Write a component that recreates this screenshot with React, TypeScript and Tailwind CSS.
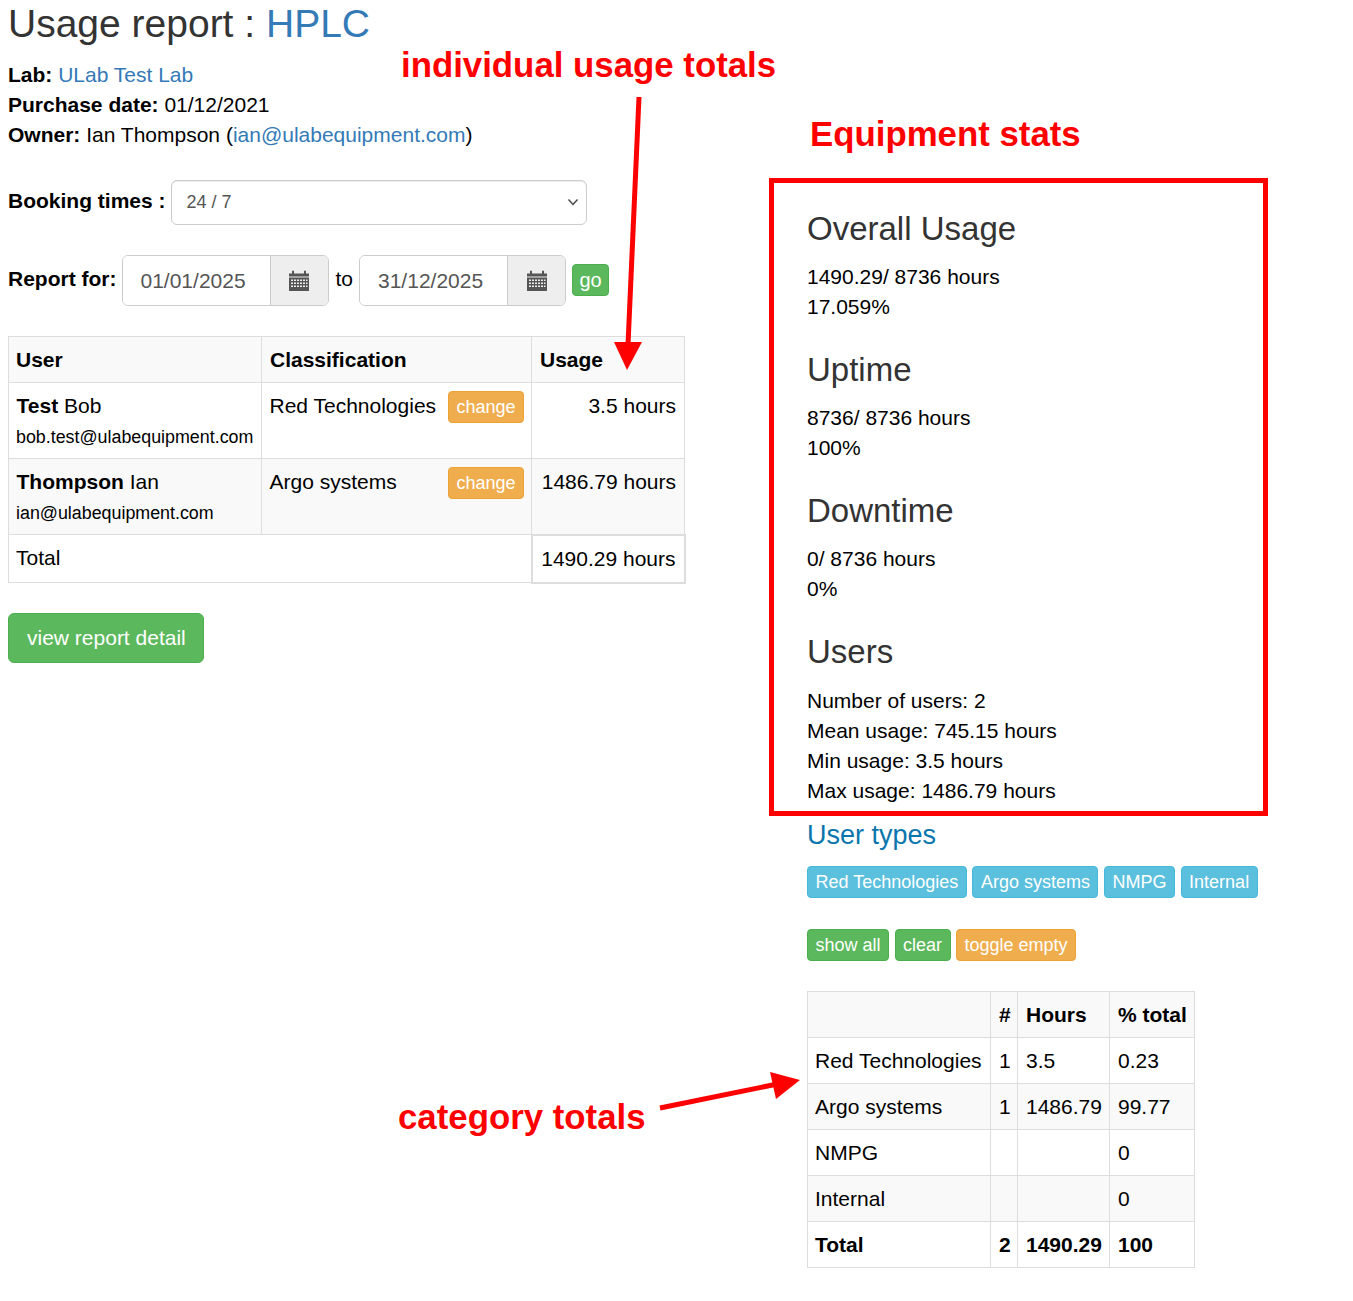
import React from "react";

const Cal = () => (
  <svg width="20" height="21" viewBox="0 0 20 21" fill="#555">
    <path d="M0 3.5h3V1.5a1 1 0 0 1 2 0v2h10v-2a1 1 0 0 1 2 0v2h3V6.5H0z" />
    <path fillRule="evenodd" d="M0 7.5h20V21H0zM2 9.5v1.6h2V9.5zM5 9.5v1.6h2V9.5zM8 9.5v1.6h2V9.5zM11 9.5v1.6h2V9.5zM14 9.5v1.6h2V9.5zM17 9.5v1.6h1.5V9.5zM2 12.5v1.6h2v-1.6zM5 12.5v1.6h2v-1.6zM8 12.5v1.6h2v-1.6zM11 12.5v1.6h2v-1.6zM14 12.5v1.6h2v-1.6zM17 12.5v1.6h1.5v-1.6zM2 15.5v1.6h2v-1.6zM5 15.5v1.6h2v-1.6zM8 15.5v1.6h2v-1.6zM11 15.5v1.6h2v-1.6zM14 15.5v1.6h2v-1.6zM17 15.5v1.6h1.5v-1.6z" />
  </svg>
);

const DateInput = ({ value, w }: { value: string; w: string }) => (
  <div className={`flex h-[51px] ${w} rounded-[6px] border border-[#ccc] overflow-hidden`}>
    <div className="flex-1 flex items-center pl-[18px] text-[#555] bg-white">{value}</div>
    <div className="w-[58px] flex items-center justify-center bg-[#eee] border-l border-[#ccc]">
      <Cal />
    </div>
  </div>
);

const Sm = ({ c, children }: { c: string; children: React.ReactNode }) => (
  <span className={`inline-flex items-center justify-center h-[32px] px-[7.5px] text-[18px] text-white rounded-[4px] border ${c}`}>{children}</span>
);
const orange = "bg-[#f0ad4e] border-[#eea236]";
const green = "bg-[#5cb85c] border-[#4cae4c]";
const blue = "bg-[#5bc0de] border-[#46b8da]";

const Stat = ({ title, lines, mt, mb }: { title: string; lines: string[]; mt?: string; mb: string }) => (
  <div className={mt}>
    <h3 className={`text-[33px] leading-[35px] text-[#333] ${mb}`}>{title}</h3>
    {lines.map((l) => (
      <div key={l}>{l}</div>
    ))}
  </div>
);

const td = "border border-[#ddd] pl-[8px] first:pl-[7px] pr-[8px] pt-[8px] pb-[7px] align-top";
const tu = "border border-[#ddd] pl-[8px] first:pl-[7px] pr-[8px] pt-[8px] pb-[6px] align-top";
const tc = "border border-[#ddd] pl-[7.5px] pr-[7px] pt-[8px] pb-[6px] align-top";

export default function App() {
  return (
    <div className="relative w-[1353px] h-[1301px] bg-white text-black text-[21px] leading-[30px] font-['Liberation_Sans',Arial,sans-serif] overflow-hidden">
      <div className="flex">
        <div className="w-[807px] pl-[8px] shrink-0">
          <h1 className="text-[39px] leading-[42px] text-[#333] mt-[3px]">
            Usage report : <a className="text-[#337ab7]">HPLC</a>
          </h1>
          <div className="mt-[15px]">
            <div><b>Lab:</b> <a className="text-[#337ab7]">ULab Test Lab</a></div>
            <div><b>Purchase date:</b> 01/12/2021</div>
            <div><b>Owner:</b> Ian Thompson (<a className="text-[#337ab7]">ian@ulabequipment.com</a>)</div>
          </div>
          <div className="flex items-center mt-[30px] h-[45px]">
            <b className="mr-[5px] -mt-[3px]">Booking times :</b>
            <div className="flex items-center justify-between w-[416px] h-[45px] rounded-[6px] border border-[#ccc] pl-[15px] pr-[7px] pb-[2px] text-[18px] text-[#555] shadow-[inset_0_1px_1px_rgba(0,0,0,0.075)]">
              <span>24 / 7</span>
              <svg width="12" height="8" viewBox="0 0 12 8" fill="none" stroke="#444" strokeWidth="1.4"><path d="M1.5 1.5 6 6.5l4.5-5" /></svg>
            </div>
          </div>
          <div className="flex items-center mt-[30px] h-[51px]">
            <b className="mr-[5px] -mt-[3px]">Report for:</b>
            <DateInput value="01/01/2025" w="w-[207px]" />
            <span className="ml-[7px] mr-[6px] -mt-[3px]">to</span>
            <DateInput value="31/12/2025" w="w-[207px]" />
            <span className="ml-[6px] -mt-[2px] inline-flex items-center justify-center h-[32px] w-[37px] text-[20px] text-white rounded-[4px] border bg-[#5cb85c] border-[#4cae4c]">go</span>
          </div>
          <table className="mt-[30px] w-[676px] table-fixed border-collapse">
            <colgroup>
              <col className="w-[253px]" />
              <col className="w-[270px]" />
              <col className="w-[153px]" />
            </colgroup>
            <tbody>
              <tr className="bg-[#f9f9f9]">
                <th className={`${td} text-left`}>User</th>
                <th className={`${td} text-left`}>Classification</th>
                <th className={`${td} text-left`}>Usage</th>
              </tr>
              <tr>
                <td className={tu}>
                  <div className="pl-[0.5px]"><b>Test</b> Bob</div>
                  <div className="text-[17.85px] mt-[1px] whitespace-nowrap">bob.test@ulabequipment.com</div>
                </td>
                <td className={tc}>
                  <div className="flex justify-between items-start">
                    <span>Red Technologies</span>
                    <Sm c={orange}>change</Sm>
                  </div>
                </td>
                <td className={`${tu} text-right`}>3.5 hours</td>
              </tr>
              <tr className="bg-[#f9f9f9]">
                <td className={tu}>
                  <div className="pl-[0.5px]"><b>Thompson</b> Ian</div>
                  <div className="text-[17.85px] mt-[1px] whitespace-nowrap">ian@ulabequipment.com</div>
                </td>
                <td className={tc}>
                  <div className="flex justify-between items-start">
                    <span>Argo systems</span>
                    <Sm c={orange}>change</Sm>
                  </div>
                </td>
                <td className={`${tu} text-right`}>1486.79 hours</td>
              </tr>
              <tr className="h-[48px]">
                <td className={td} colSpan={2}>Total</td>
                <td className="border-2 border-[#ddd] pl-[7px] pr-[8px] pt-[8px] pb-[7px] align-top text-right whitespace-nowrap">1490.29 hours</td>
              </tr>
            </tbody>
          </table>
          <div className="mt-[29px] inline-flex items-center h-[50px] pl-[18px] pr-[17px] text-white rounded-[6px] border bg-[#5cb85c] border-[#4cae4c]">view report detail</div>
        </div>
        <div className="flex-1 pt-[211px]">
          <Stat mb="mb-[16px]" title="Overall Usage" lines={["1490.29/ 8736 hours", "17.059%"]} />
          <Stat mb="mb-[16px]" mt="mt-[30px]" title="Uptime" lines={["8736/ 8736 hours", "100%"]} />
          <Stat mb="mb-[16px]" mt="mt-[30px]" title="Downtime" lines={["0/ 8736 hours", "0%"]} />
          <Stat mb="mb-[17px]" mt="mt-[30px]" title="Users" lines={["Number of users: 2", "Mean usage: 745.15 hours", "Min usage: 3.5 hours", "Max usage: 1486.79 hours"]} />
          <h4 className="mt-[11px] text-[27px] leading-[36px] text-[#0a76ad]">User types</h4>
          <div className="mt-[13px] flex gap-[5.6px]">
            <Sm c={blue}>Red Technologies</Sm>
            <Sm c={blue}>Argo systems</Sm>
            <Sm c={blue}>NMPG</Sm>
            <Sm c={blue}>Internal</Sm>
          </div>
          <div className="mt-[31px] flex gap-[5.5px]">
            <Sm c={green}>show all</Sm>
            <Sm c={green}>clear</Sm>
            <Sm c={orange}>toggle empty</Sm>
          </div>
          <table className="mt-[30px] w-[387px] table-fixed border-collapse">
            <colgroup>
              <col className="w-[183px]" />
              <col className="w-[27px]" />
              <col className="w-[92px]" />
              <col className="w-[85px]" />
            </colgroup>
            <tbody>
              <tr className="bg-[#f9f9f9]">
                <th className={td}></th>
                <th className={`${td} text-left`}>#</th>
                <th className={`${td} text-left`}>Hours</th>
                <th className={`${td} text-left whitespace-nowrap`}>% total</th>
              </tr>
              {[
                ["Red Technologies", "1", "3.5", "0.23"],
                ["Argo systems", "1", "1486.79", "99.77"],
                ["NMPG", "", "", "0"],
                ["Internal", "", "", "0"],
              ].map((r, i) => (
                <tr key={r[0]} className={i % 2 === 1 ? "bg-[#f9f9f9]" : "bg-white"}>
                  {r.map((c, j) => (
                    <td key={j} className={`${td} whitespace-nowrap`}>{c}</td>
                  ))}
                </tr>
              ))}
              <tr className="bg-white font-bold">
                <td className={td}>Total</td>
                <td className={td}>2</td>
                <td className={`${td} whitespace-nowrap`}>1490.29</td>
                <td className={td}>100</td>
              </tr>
            </tbody>
          </table>
        </div>
      </div>

      {/* Annotations lying over the page */}
      <div className="absolute left-[768.5px] top-[177.5px] w-[499px] h-[638px] border-[5px] border-[#ff0000] pointer-events-none" />
      <div className="absolute left-[401px] top-[45px] text-[34.8px] leading-[40px] font-bold text-[#ff0000] whitespace-nowrap">individual usage totals</div>
      <div className="absolute left-[810px] top-[114px] text-[34.8px] leading-[40px] font-bold text-[#ff0000] whitespace-nowrap">Equipment stats</div>
      <div className="absolute left-[398px] top-[1097px] text-[34.8px] leading-[40px] font-bold text-[#ff0000] whitespace-nowrap">category totals</div>
      <svg className="absolute left-0 top-0 pointer-events-none" width="1353" height="1301" fill="#ff0000">
        <path d="M639 97 628 345" stroke="#ff0000" strokeWidth="5" />
        <path d="M614 342 642 342 627 370z" />
        <path d="M660 1108 775 1084.5" stroke="#ff0000" strokeWidth="5" />
        <path d="M770 1072 800 1080 776 1099z" />
      </svg>
    </div>
  );
}
